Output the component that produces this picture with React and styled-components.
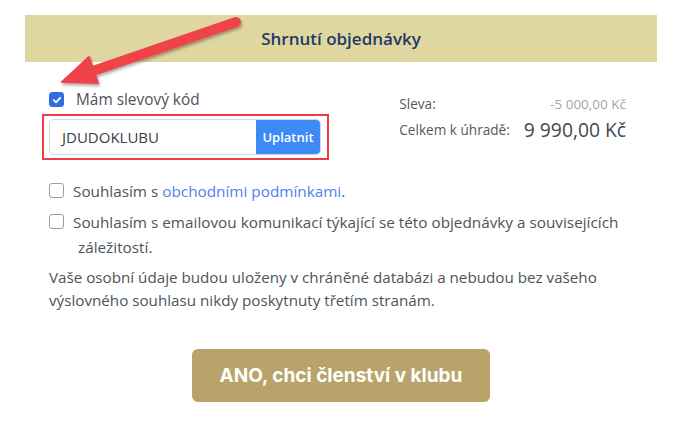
import React from "react";
import styled, { createGlobalStyle } from "styled-components";

const Global = createGlobalStyle`
  html, body { margin: 0; padding: 0; background: #fff; }
  body { font-family: "Open Sans", "Noto Sans", sans-serif; color: #4f5358; }
`;

const Page = styled.div`
  position: relative;
  width: 681px;
  height: 423px;
  padding: 15px 0 0 25px;
  box-sizing: border-box;
`;

const Card = styled.div`
  width: 632px;
`;

const Header = styled.div`
  height: 47px;
  background: #e0d6a0;
  display: flex;
  align-items: center;
  justify-content: center;
  font-size: 17px;
  font-weight: 600;
  color: #1e3a64;
`;

const Body = styled.div`
  padding: 28px 0 0 24px;
  display: flex;
  flex-direction: column;
`;

const TopRow = styled.div`
  display: flex;
  justify-content: space-between;
  padding-right: 31px;
`;

const LeftCol = styled.div`
  display: flex;
  flex-direction: column;
  gap: 4px;
`;

const CheckRow = styled.label`
  display: flex;
  align-items: flex-start;
  gap: ${(p) => p.$gap || 9}px;
  font-size: ${(p) => p.$size || 15.3}px;
  line-height: 20px;
  color: #4f5358;
`;

const Box = styled.span`
  flex: none;
  width: 15px;
  height: 15px;
  margin-top: 2px;
  box-sizing: border-box;
  border-radius: 3px;
  border: 1px solid ${(p) => (p.$checked ? "#2f6de1" : "#9a9da3")};
  background: ${(p) => (p.$checked ? "#2f6de1" : "#fff")};
  display: flex;
  align-items: center;
  justify-content: center;
`;

const Highlight = styled.div`
  margin-left: -7px;
  width: 287px;
  box-sizing: border-box;
  border: 2px solid #ee3b43;
  padding: 3px 6px 3px 5px;
`;

const InputGroup = styled.div`
  display: flex;
  height: 34px;
  border: 1px solid #d3d5d9;
  border-radius: 5px;
  overflow: hidden;
`;

const CodeInput = styled.div`
  flex: 1;
  display: flex;
  align-items: center;
  padding-left: 12px;
  font-size: 15px;
  color: #3a3d42;
`;

const ApplyButton = styled.div`
  width: 64px;
  background: #3d8af7;
  color: #fff;
  font-size: 13px;
  font-weight: 600;
  display: flex;
  align-items: center;
  justify-content: center;
`;

const Summary = styled.div`
  display: grid;
  grid-template-columns: auto auto;
  column-gap: 14px;
  row-gap: 2px;
  align-items: center;
  align-self: flex-start;
  margin-top: 2px;
`;

const SumLabel = styled.div`
  font-size: 13.6px;
  color: #55595e;
  line-height: 24px;
`;

const SumValue = styled.div`
  text-align: right;
  font-size: ${(p) => (p.$big ? 19.3 : 13.5)}px;
  color: ${(p) => (p.$big ? "#44484d" : "#a2a6ab")};
  line-height: 24px;
`;

const Consents = styled.div`
  margin-top: 21px;
  display: flex;
  flex-direction: column;
  gap: 11px;
`;

const Link = styled.a`
  color: #4f7ff0;
  text-decoration: none;
`;

const WrapText = styled.span`
  line-height: 25px;
  margin-top: -2px;
  padding-left: 5px;
  text-indent: -5px;
  width: 570px;
`;

const Note = styled.p`
  margin: 6px 0 0;
  font-size: 15.2px;
  line-height: 23px;
  color: #4f5358;
  width: 580px;
`;

const CTAWrap = styled.div`
  display: flex;
  justify-content: center;
  margin-top: 37px;
  padding-right: 24px;
`;

const CTA = styled.button`
  width: 298px;
  height: 53px;
  border: 0;
  border-radius: 6px;
  background: #b8a46b;
  color: #fff;
  font-family: "Inter", "Open Sans", sans-serif;
  font-size: 19px;
  font-weight: 700;
`;

const Arrow = styled.svg`
  position: absolute;
  left: 0;
  top: 0;
  pointer-events: none;
`;

const Check = ({ checked }) => (
  <Box $checked={checked}>
    {checked && (
      <svg width="10" height="10" viewBox="0 0 10 10">
        <path d="M1.8 5.2 L4 7.3 L8.2 2.8" fill="none" stroke="#fff" strokeWidth="1.8" strokeLinecap="round" strokeLinejoin="round" />
      </svg>
    )}
  </Box>
);

export default function App() {
  return (
    <>
      <Global />
      <Page>
        <Card>
          <Header>Shrnutí objednávky</Header>
          <Body>
            <TopRow>
              <LeftCol>
                <CheckRow $size={15.4} $gap={12}>
                  <Check checked />
                  <span>Mám slevový kód</span>
                </CheckRow>
                <Highlight>
                  <InputGroup>
                    <CodeInput>JDUDOKLUBU</CodeInput>
                    <ApplyButton>Uplatnit</ApplyButton>
                  </InputGroup>
                </Highlight>
              </LeftCol>
              <Summary>
                <SumLabel>Sleva:</SumLabel>
                <SumValue>-5 000,00 Kč</SumValue>
                <SumLabel>Celkem k úhradě:</SumLabel>
                <SumValue $big>9 990,00 Kč</SumValue>
              </Summary>
            </TopRow>
            <Consents>
              <CheckRow>
                <Check />
                <span>
                  Souhlasím s <Link href="#">obchodními podmínkami</Link>.
                </span>
              </CheckRow>
              <CheckRow>
                <Check />
                <WrapText>
                  Souhlasím s emailovou komunikací týkající se této objednávky a souvisejících záležitostí.
                </WrapText>
              </CheckRow>
            </Consents>
            <Note>
              Vaše osobní údaje budou uloženy v chráněné databázi a nebudou bez vašeho výslovného souhlasu nikdy poskytnuty třetím stranám.
            </Note>
            <CTAWrap>
              <CTA>ANO, chci členství v klubu</CTA>
            </CTAWrap>
          </Body>
        </Card>
        <Arrow width="681" height="423" viewBox="0 0 681 423">
          <defs>
            <filter id="sh" x="-20%" y="-20%" width="140%" height="160%">
              <feDropShadow dx="1" dy="2" stdDeviation="1.5" floodColor="#000" floodOpacity="0.35" />
            </filter>
          </defs>
          <g filter="url(#sh)" fill="#f0424a" stroke="#f0424a">
            <line x1="236" y1="22" x2="90" y2="72" strokeWidth="10" strokeLinecap="round" />
            <polygon points="62,82 89,57 98,83" strokeWidth="2" strokeLinejoin="round" />
          </g>
        </Arrow>
      </Page>
    </>
  );
}
